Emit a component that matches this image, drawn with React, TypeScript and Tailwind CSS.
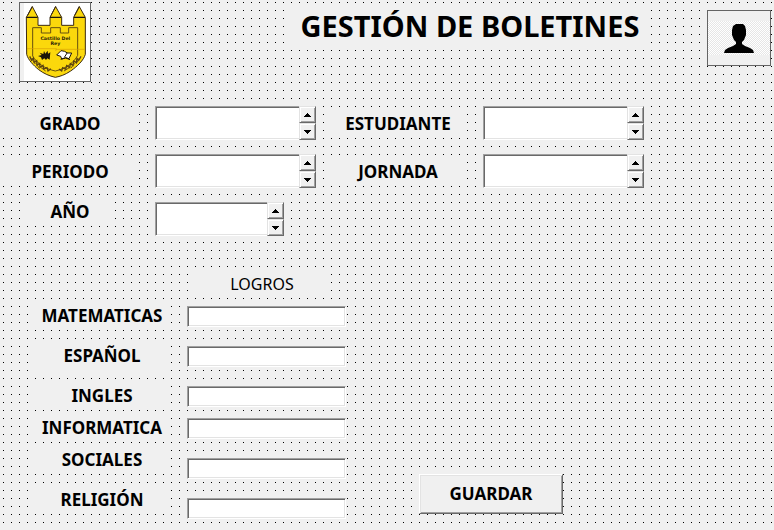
import React from "react";

const sunken =
  "border border-t-[#a0a0a0] border-l-[#a0a0a0] border-r-white border-b-white bg-white shadow-[inset_1px_1px_0_#696969,inset_-1px_-1px_0_#e3e3e3] px-1 text-base outline-none";

const labelBase = "block shrink-0 bg-[#f0f0f0] text-center text-[17px] font-bold";

function Arrow({ down = false }: { down?: boolean }) {
  return (
    <svg width="7" height="4" viewBox="0 0 7 4" shapeRendering="crispEdges" aria-hidden="true">
      {down ? (
        <path d="M0 0h7v1H0zM1 1h5v1H1zM2 2h3v1H2zM3 3h1v1H3z" />
      ) : (
        <path d="M3 0h1v1H3zM2 1h3v1H2zM1 2h5v1H1zM0 3h7v1H0z" />
      )}
    </svg>
  );
}

function SpinButton({ label, down = false }: { label: string; down?: boolean }) {
  return (
    <button
      type="button"
      aria-label={label}
      className="flex h-[17px] w-[17px] items-center justify-center border border-t-[#e3e3e3] border-l-[#e3e3e3] border-r-[#696969] border-b-[#696969] bg-[#f0f0f0] shadow-[inset_1px_1px_0_#fff,inset_-1px_-1px_0_#a0a0a0]"
    >
      <Arrow down={down} />
    </button>
  );
}

function SpinField({ id, name, narrow = false }: { id: string; name: string; narrow?: boolean }) {
  return (
    <div className={narrow ? "flex h-[34px] w-[129px]" : "flex h-[34px] w-[161px]"}>
      <input
        id={id}
        type="text"
        className="min-w-0 flex-1 border border-r-0 border-t-[#a0a0a0] border-l-[#a0a0a0] border-b-white bg-white px-1 text-base shadow-[inset_1px_1px_0_#696969,inset_0_-1px_0_#e3e3e3] outline-none"
      />
      <div className="flex flex-col">
        <SpinButton label={`${name} anterior`} />
        <SpinButton label={`${name} siguiente`} down />
      </div>
    </div>
  );
}

function Field({ id, name }: { id: string; name: string }) {
  return (
    <div className="flex items-start gap-[17px]">
      <label htmlFor={id} className={`${labelBase} mt-1 h-7 w-[136px] leading-7`}>
        {name}
      </label>
      <SpinField id={id} name={name} />
    </div>
  );
}

function Shield() {
  return (
    <svg viewBox="60 9 210 234" className="h-full w-full" role="img" aria-label="Escudo Castillo Del Rey">
      <rect x="72" y="9" width="198" height="234" fill="#fff" />
      <path
        d="M79 52 97 20l17 32v24h36V52l17-32 18 32v24h36V52l17-32 18 32v111c-5 18-24 36-44 50-18 12-31 16-46 19-18-4-34-11-50-23-16-13-32-30-36-46z"
        fill="#fbd80c"
        stroke="#3a2a12"
        strokeWidth="3"
      />
      <path d="M79 52h34M150 52h34M221 52h34" stroke="#1c150a" strokeWidth="4" />
      <path d="M97 19 83 46M167 19l-14 27M238 19l-14 27" stroke="#3a2a12" strokeWidth="3" />
      <path
        d="M98 168V83h26v16h28V83h29v16h25V83h27v83c-10 20-34 40-67 47-30-6-56-24-68-45z"
        fill="none"
        stroke="#66500f"
        strokeWidth="3"
      />
      <path d="M81 146h88l-2 7M168 148h86" stroke="#d9a006" strokeWidth="2" fill="none" />
      <path
        d="m89 169 6 12 5-7 3 13 7-5 1 13 8-5 1 12 9-6 2 11 10-4 3 10 9-7M243 169l-7 12-5-6-2 13-8-5-2 13-8-5-2 12-9-6-3 11-9-5-3 10-8-6"
        fill="none"
        stroke="#5b4310"
        strokeWidth="4"
      />
      <path
        d="m95 174 9 17M107 189l11 16M122 202l15 11M238 174l-9 17M224 190l-11 14M208 203l-16 10"
        stroke="#6b5012"
        strokeWidth="3"
      />
      <path
        d="m114 168 11-3-6-7 11 4 2-9 4 8 7-9 1 9 7-4-2 22-7-4-4 5-5-5-7 5-3-8z"
        fill="#1b1608"
      />
      <path d="m170 165 13-13 11 2 8 5 13 0-8 17-10-3-12 4-3-8z" fill="#fff" stroke="#1b1608" strokeWidth="3" />
      <path d="m202 158-9 14M182 178l15-4 13 5" fill="none" stroke="#1b1608" strokeWidth="3" />
      <g
        fontFamily="'DejaVu Sans', sans-serif"
        fontSize="14"
        fontWeight="700"
        textAnchor="middle"
        fill="#2a1d08"
      >
        <text x="166" y="119">Castillo Del</text>
        <text x="166" y="136">Rey</text>
      </g>
    </svg>
  );
}

function Person() {
  return (
    <svg viewBox="0 0 62 54" className="h-full w-full" role="img" aria-label="Usuario">
      <defs>
        <pattern id="checker" width="2" height="2" patternUnits="userSpaceOnUse">
          <rect width="2" height="2" fill="#fff" />
          <path d="M0 0h1v1H0zM1 1h1v1H1z" fill="#e6e6e6" />
        </pattern>
      </defs>
      <rect y="10" width="62" height="34" fill="url(#checker)" />
      <path d="M28 13h7l2 2 1 4v5l-2 5-2 2v2l3 2 5 2 3 2 1 3H16l1-3 3-2 5-2 3-2v-2l-2-2-2-5v-5l1-4z" />
    </svg>
  );
}

const subjects = [
  { id: "matematicas", name: "MATEMATICAS", row: "h-10", label: "h-6", input: "mt-0.5" },
  { id: "espanol", name: "ESPAÑOL", row: "h-10", label: "h-7", input: "mt-0.5" },
  { id: "ingles", name: "INGLES", row: "h-8", label: "h-6", input: "mt-0.5" },
  { id: "informatica", name: "INFORMATICA", row: "h-8", label: "h-6", input: "mt-0.5" },
  { id: "sociales", name: "SOCIALES", row: "h-10", label: "h-6", input: "mt-2.5" },
  { id: "religion", name: "RELIGIÓN", row: "h-8", label: "h-6", input: "mt-2.5" },
];

export default function App() {
  return (
    <main className="min-h-screen bg-[#f0f0f0] bg-[linear-gradient(90deg,transparent_1px,#f0f0f0_1px),linear-gradient(#000_1px,transparent_1px)] bg-[length:8px_8px] bg-[position:3px_2px] font-['Noto_Sans',sans-serif] text-black">
      <header className="flex items-start pt-0.5 pr-[3px] pl-[19px]">
        <div className="h-20 w-[72px] shrink-0 border border-[#646464] bg-[#f0f0f0]">
          <Shield />
        </div>
        <h1 className="mt-0.5 ml-[199px] h-11 w-[360px] bg-[#f0f0f0] text-center text-[29px] leading-11 font-bold whitespace-nowrap">
          GESTIÓN DE BOLETINES
        </h1>
        <div className="mt-2 ml-auto h-14 w-16 shrink-0 border border-[#646464] bg-[#f0f0f0]">
          <Person />
        </div>
      </header>

      <form onSubmit={(e) => e.preventDefault()}>
        <div className="mt-6 flex flex-col gap-3.5 pl-0.5">
          <div className="flex gap-3.5">
            <Field id="grado" name="GRADO" />
            <Field id="estudiante" name="ESTUDIANTE" />
          </div>
          <div className="flex gap-3.5">
            <Field id="periodo" name="PERIODO" />
            <Field id="jornada" name="JORNADA" />
          </div>
          <div className="flex items-start gap-[41px] pl-6">
            <label htmlFor="anio" className={`${labelBase} h-5 w-[88px] leading-5`}>
              AÑO
            </label>
            <SpinField id="anio" name="AÑO" narrow />
          </div>
        </div>

        <div className="mt-9 flex items-end gap-[73px]">
          <section aria-labelledby="logros" className="pl-[34px]">
            <h2 id="logros" className="ml-40 h-6 w-[136px] bg-[#f0f0f0] text-center text-base leading-6 font-normal">
              LOGROS
            </h2>
            <div className="pt-2">
              {subjects.map((s) => (
                <div key={s.id} className={`flex items-start gap-[17px] ${s.row}`}>
                  <label htmlFor={s.id} className={`${labelBase} ${s.label} w-[136px] leading-6`}>
                    {s.name}
                  </label>
                  <input id={s.id} type="text" className={`${sunken} ${s.input} h-[21px] w-[159px]`} />
                </div>
              ))}
            </div>
          </section>
          <button
            type="submit"
            className="mb-1.5 h-10 w-36 border border-t-white border-l-white border-r-[#696969] border-b-[#696969] bg-[#f0f0f0] text-[17px] font-bold shadow-[inset_1px_1px_0_#e3e3e3,inset_-1px_-1px_0_#a0a0a0]"
          >
            GUARDAR
          </button>
        </div>
      </form>
    </main>
  );
}
